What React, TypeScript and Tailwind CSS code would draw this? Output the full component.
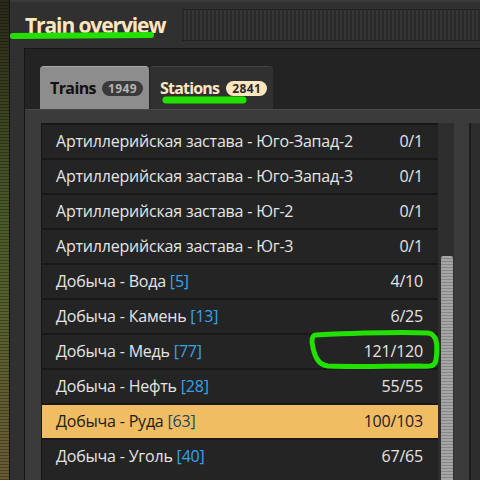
import React from "react";

type Station = {
  name: string;
  count?: number;
  trains: string;
  active?: boolean;
};

const stations: Station[] = [
  { name: "Артиллерийская застава - Юго-Запад-2", trains: "0/1" },
  { name: "Артиллерийская застава - Юго-Запад-3", trains: "0/1" },
  { name: "Артиллерийская застава - Юг-2", trains: "0/1" },
  { name: "Артиллерийская застава - Юг-3", trains: "0/1" },
  { name: "Добыча - Вода", count: 5, trains: "4/10" },
  { name: "Добыча - Камень", count: 13, trains: "6/25" },
  { name: "Добыча - Медь", count: 77, trains: "121/120" },
  { name: "Добыча - Нефть", count: 28, trains: "55/55" },
  { name: "Добыча - Руда", count: 63, trains: "100/103", active: true },
  { name: "Добыча - Уголь", count: 40, trains: "67/65" },
];

const font = { fontFamily: '"Open Sans", "Noto Sans", sans-serif' };

function StationRow({ station }: { station: Station }) {
  return (
    <div
      className={`flex h-[35px] shrink-0 items-center justify-between border-t-2 border-[#181818] pb-[2px] pl-[14px] pr-[15px] text-[16px] tracking-[-0.2px] ${
        station.active ? "bg-[#f0bd63] text-[#1c1c1c]" : "bg-[#252425] text-[#e4e4e4]"
      }`}
    >
      <span>
        {station.name}
        {station.count !== undefined && (
          <span className={station.active ? "text-[#284563]" : "text-[#37a2e8]"}>
            {" "}[{station.count}]
          </span>
        )}
      </span>
      <span>{station.trains}</span>
    </div>
  );
}

export default function App() {
  return (
    <div className="relative flex h-[480px] w-[480px] overflow-hidden" style={font}>
      {/* кусок игрового мира слева */}
      <div className="w-[9px] shrink-0 bg-[linear-gradient(180deg,#2a2818_0%,#3a4020_22%,#4a5a28_45%,#56602c_65%,#6a5a34_100%)]">
        <div className="h-full w-full bg-[repeating-linear-gradient(180deg,transparent_0px,transparent_2px,rgba(0,0,0,0.3)_2px,rgba(0,0,0,0.3)_3px)]" />
      </div>

      <div className="flex flex-1 flex-col border-l border-[#151515] bg-[#313031]">
        {/* заголовок */}
        <div className="flex h-[48px] shrink-0 items-center border-t-2 border-[#3b3a3b] pl-[15px]">
          <h1 className="text-[21px] leading-none font-bold tracking-[-1.1px] text-[#ffe6c0]">Train overview</h1>
          <div className="ml-[17px] h-[32px] flex-1 border-t border-b border-[#222122] bg-[repeating-linear-gradient(90deg,#2a292a_0px,#2a292a_2px,#363536_2px,#363536_4px)]" />
        </div>

        {/* тело окна */}
        <div className="ml-[14px] flex flex-1 flex-col border-t border-l border-[#151515] bg-[#242324]">
          <div className="flex h-[60px] shrink-0 items-end pl-[15px]">
            <div className="flex h-[43px] w-[109px] items-center gap-[6px] rounded-t-[4px] border-t border-[#a8a8a8] bg-[#8d8d8d] pl-[10px]">
              <span className="text-[16px] font-bold tracking-[-0.6px] text-[#111]">Trains</span>
              <span className="rounded-full bg-[#3a3a3a] px-[6px] text-[12px] leading-[15px] font-bold tracking-[0.4px] text-[#b4b4b4]">1949</span>
            </div>
            <div className="ml-px flex h-[43px] w-[123px] items-center gap-[7px] rounded-t-[4px] border-t border-[#444344] bg-[#313031] pl-[10px]">
              <span className="text-[16px] font-bold tracking-[-0.8px] text-[#ffe6c0]">Stations</span>
              <span className="rounded-full bg-[#ffe6c0] px-[6px] text-[12px] leading-[15px] font-bold tracking-[0.4px] text-[#2a2a2a]">2841</span>
            </div>
          </div>

          {/* содержимое вкладки */}
          <div className="flex flex-1 border-t border-[#4a494a] bg-[#3c3b3c] pt-[13px] pl-[16px]">
            <div className="flex w-[397px] flex-col overflow-hidden border-l border-[#181818] bg-[#252425]">
              {stations.map((s) => (
                <StationRow key={s.name} station={s} />
              ))}
            </div>
            <div className="flex w-[16px] flex-col bg-[#2f2e2f] pt-[133px] pl-[3px]">
              <div className="h-[240px] w-[12px] rounded-t-[2px] bg-[repeating-linear-gradient(180deg,#a6a6a6_0px,#a6a6a6_2px,#858585_2px,#858585_3px)]" />
            </div>
            <div className="w-[15px] bg-[#3c3b3c]" />
            <div className="flex-1 border-l-2 border-[#1c1c1c] bg-[#2e2d2e]" />
          </div>
        </div>
      </div>

      {/* зелёные пометки поверх */}
      <svg className="pointer-events-none absolute inset-0" width="480" height="480">
        <g fill="none" stroke="#22e000" strokeLinecap="round" strokeLinejoin="round">
          <path d="M13 36 L151 35" strokeWidth="6" />
          <path d="M166 100 L243 100" strokeWidth="7" />
          <path
            d="M316 335 C360 333 400 332 428 333 C437 334 438 345 436 360 C435 366 431 367 420 366 C390 366 350 367 328 366 C318 365 314 356 312 342 C312 337 313 335 316 335 Z"
            strokeWidth="5"
          />
        </g>
      </svg>
    </div>
  );
}
